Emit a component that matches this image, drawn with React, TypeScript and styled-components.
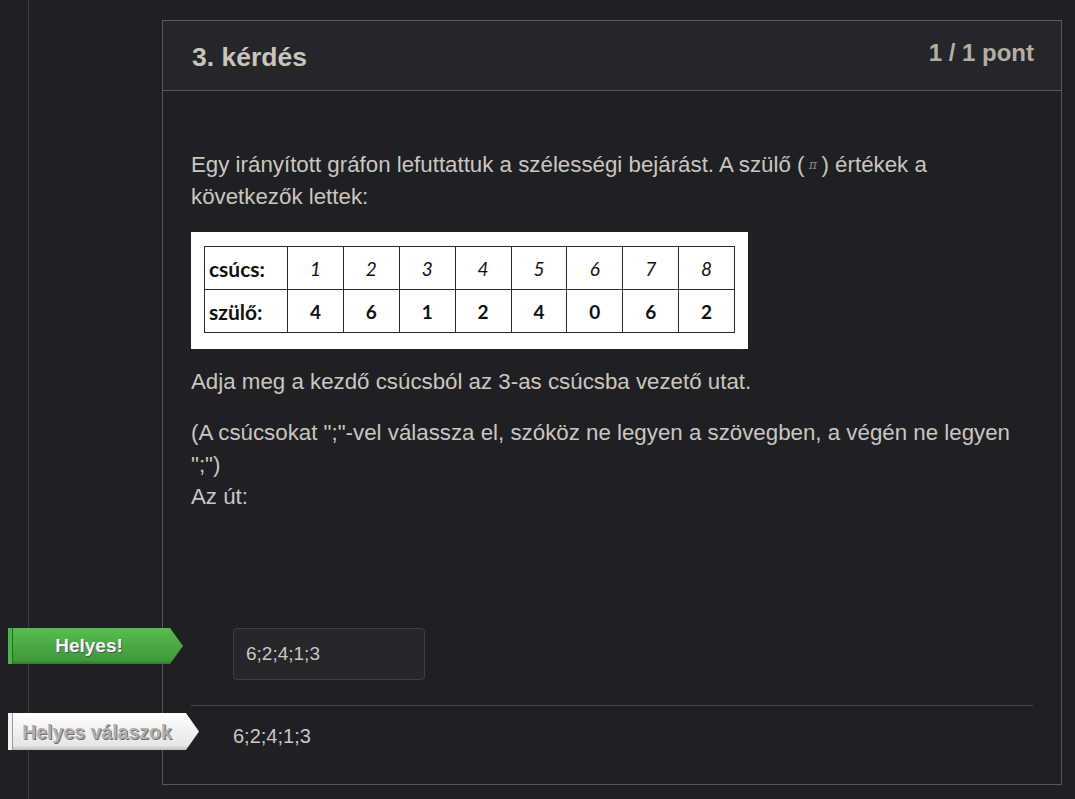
import React from "react";
import styled, { createGlobalStyle } from "styled-components";

const Global = createGlobalStyle`
  html, body { margin: 0; padding: 0; background: #1f2023; }
  body { font-family: "Liberation Sans", Arial, sans-serif; color: #cbc6bf; }
`;

const Page = styled.div`
  padding-left: 28px;
  min-height: 799px;
  box-sizing: border-box;
`;

const Rail = styled.div`
  border-left: 1px solid #3a3b3e;
  min-height: 799px;
  box-sizing: border-box;
  padding: 20px 13px 14px 133px;
`;

const Card = styled.section`
  border: 1px solid #56575a;
  background: #1f2023;
`;

const Header = styled.header`
  display: flex;
  justify-content: space-between;
  align-items: flex-start;
  height: 70px;
  box-sizing: border-box;
  background: #252629;
  border-bottom: 1px solid #56575a;
  padding: 0 27px 0 29px;
`;

const Title = styled.h2`
  margin: 0;
  padding-top: 21px;
  font-size: 26.5px;
  font-weight: bold;
  color: #c9c4bc;
  line-height: 30px;
`;

const Points = styled.div`
  padding-top: 18px;
  font-size: 24px;
  font-weight: bold;
  color: #b4aea6;
  line-height: 28px;
`;

const Body = styled.div`
  padding: 58px 28px 0 28px;
`;

const Para = styled.p<{ $mb?: number }>`
  margin: 0 0 ${(p) => p.$mb ?? 19}px 0;
  font-size: 22.3px;
  line-height: 32px;
  color: #cbc6bf;
`;

const Pi = styled.span`
  display: inline-block;
  width: 17px;
  text-align: center;
  font-family: "DejaVu Serif", serif;
  font-style: italic;
  font-size: 12px;
  line-height: 12px;
  color: #8a8a8a;
  vertical-align: 3px;
`;

const ImageBox = styled.div`
  width: 557px;
  height: 117px;
  box-sizing: border-box;
  background: #ffffff;
  padding: 14px 13px 16px 13px;
  margin-bottom: 17px;
`;

const Table = styled.table`
  border-collapse: collapse;
  width: 531px;
  height: 87px;
  font-family: Lato, "Liberation Sans", sans-serif;
  color: #111;
`;

const Cell = styled.td<{ $kind: "label" | "index" | "value" }>`
  border: 1.5px solid #2a2a2a;
  padding: 0 4px;
  width: ${(p) => (p.$kind === "label" ? "74px" : "auto")};
  text-align: ${(p) => (p.$kind === "label" ? "left" : "center")};
  font-weight: ${(p) => (p.$kind === "index" ? 400 : 700)};
  font-style: ${(p) => (p.$kind === "index" ? "italic" : "normal")};
  font-size: ${(p) => (p.$kind === "label" ? "21px" : "19px")};
`;

const AnswerRow = styled.div`
  position: relative;
  margin-top: 115px;
  height: 77px;
`;

const Tag = styled.div<{ $tone: "green" | "white" }>`
  position: absolute;
  left: -183px;
  top: ${(p) => (p.$tone === "green" ? "0" : "7px")};
  width: ${(p) => (p.$tone === "green" ? "175px" : "191px")};
  height: ${(p) => (p.$tone === "green" ? "36px" : "37px")};
  box-sizing: border-box;
  padding-right: 13px;
  display: flex;
  align-items: center;
  justify-content: center;
  font-size: ${(p) => (p.$tone === "green" ? "19px" : "19.5px")};
  font-weight: bold;
  clip-path: polygon(0 0, calc(100% - 13px) 0, 100% 50%, calc(100% - 13px) 100%, 0 100%);
  ${(p) =>
    p.$tone === "green"
      ? `
    background: linear-gradient(#56bd50, #3e9a3a 90%, #2f7a2c);
    color: #f4f4f4;
    text-shadow: 1px 1px 0 #555;
    box-shadow: inset 4px 0 0 #4cb548, inset 5px 0 0 #2b6a28;
  `
      : `
    background: linear-gradient(#ffffff, #e6e6e6 88%, #bdbdbd);
    color: #b3aeaa;
    text-shadow: 1px 1px 0 #6f6f6f;
    box-shadow: inset 4px 0 0 #f2f2f2, inset 5px 0 0 #9a9a9a;
  `}
`;

const Input = styled.div`
  margin-left: 42px;
  margin-top: 3px;
  width: 192px;
  height: 52px;
  box-sizing: border-box;
  border: 1px solid #3d3e42;
  border-radius: 4px;
  background: #26272a;
  padding: 0 12px;
  display: flex;
  align-items: center;
  font-size: 19px;
  color: #cbc6bf;
`;

const CorrectRow = styled.div`
  position: relative;
  border-top: 1px solid #46474a;
  padding: 14px 0 32px 42px;
  font-size: 20px;
  line-height: 32px;
  color: #cbc6bf;
`;

const indices = ["1", "2", "3", "4", "5", "6", "7", "8"];
const parents = ["4", "6", "1", "2", "4", "0", "6", "2"];

export default function App() {
  return (
    <>
      <Global />
      <Page>
        <Rail>
          <Card>
            <Header>
              <Title>3. kérdés</Title>
              <Points>1 / 1 pont</Points>
            </Header>
            <Body>
              <Para>
                Egy irányított gráfon lefuttattuk a szélességi bejárást. A szülő (<Pi>π</Pi>) értékek a
                következők lettek:
              </Para>
              <ImageBox>
                <Table>
                  <tbody>
                    <tr>
                      <Cell $kind="label">csúcs:</Cell>
                      {indices.map((n) => (
                        <Cell key={n} $kind="index">
                          {n}
                        </Cell>
                      ))}
                    </tr>
                    <tr>
                      <Cell $kind="label">szülő:</Cell>
                      {parents.map((n, i) => (
                        <Cell key={i} $kind="value">
                          {n}
                        </Cell>
                      ))}
                    </tr>
                  </tbody>
                </Table>
              </ImageBox>
              <Para>Adja meg a kezdő csúcsból az 3-as csúcsba vezető utat.</Para>
              <Para $mb={0}>
                (A csúcsokat ";"-vel válassza el, szóköz ne legyen a szövegben, a végén ne legyen
                ";")
                <br />
                Az út:
              </Para>
              <AnswerRow>
                <Tag $tone="green">Helyes!</Tag>
                <Input>6;2;4;1;3</Input>
              </AnswerRow>
              <CorrectRow>
                <Tag $tone="white">Helyes válaszok</Tag>
                6;2;4;1;3
              </CorrectRow>
            </Body>
          </Card>
        </Rail>
      </Page>
    </>
  );
}
